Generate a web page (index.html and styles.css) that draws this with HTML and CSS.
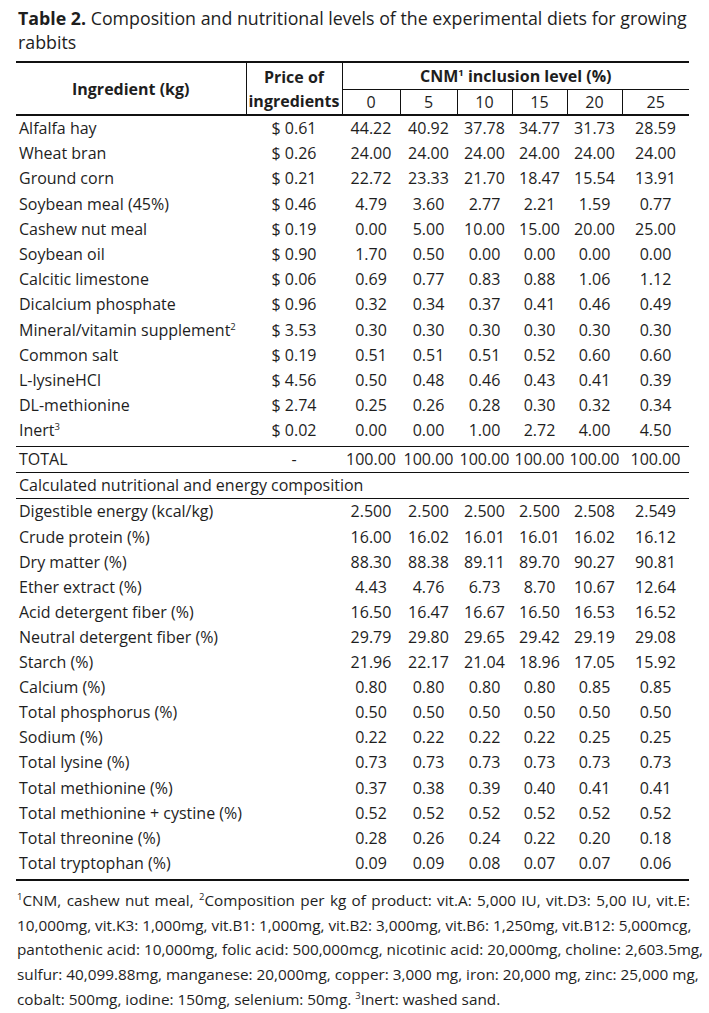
FILE: index.html
```html
<!DOCTYPE html>
<html lang="en">
<head>
<meta charset="utf-8">
<title>Table 2</title>
<link rel="stylesheet" href="styles.css">
</head>
<body>
<div class="page">
  <p class="caption"><span class="cap-line"><b>Table 2.</b> Composition and nutritional levels of the experimental diets for growing</span><span class="cap-line">rabbits</span></p>
  <table class="diet">
    <colgroup>
      <col class="c-ing"><col class="c-price"><col class="c-0"><col class="c-5"><col class="c-10"><col class="c-15"><col class="c-20"><col class="c-25">
    </colgroup>
    <thead>
      <tr class="h1">
        <th rowspan="2" class="vr">Ingredient (kg)</th>
        <th rowspan="2" class="vr price-h">Price of<br>ingredients</th>
        <th colspan="6" class="cnm">CNM<sup>1</sup> inclusion level (%)</th>
      </tr>
      <tr class="h2">
        <th class="lvl vr">0</th><th class="lvl vr">5</th><th class="lvl vr">10</th><th class="lvl vr">15</th><th class="lvl vr">20</th><th class="lvl">25</th>
      </tr>
    </thead>
    <tbody class="ingredients">
      <tr><td>Alfalfa hay</td><td>$ 0.61</td><td>44.22</td><td>40.92</td><td>37.78</td><td>34.77</td><td>31.73</td><td>28.59</td></tr>
      <tr><td>Wheat bran</td><td>$ 0.26</td><td>24.00</td><td>24.00</td><td>24.00</td><td>24.00</td><td>24.00</td><td>24.00</td></tr>
      <tr><td>Ground corn</td><td>$ 0.21</td><td>22.72</td><td>23.33</td><td>21.70</td><td>18.47</td><td>15.54</td><td>13.91</td></tr>
      <tr><td>Soybean meal (45%)</td><td>$ 0.46</td><td>4.79</td><td>3.60</td><td>2.77</td><td>2.21</td><td>1.59</td><td>0.77</td></tr>
      <tr><td>Cashew nut meal</td><td>$ 0.19</td><td>0.00</td><td>5.00</td><td>10.00</td><td>15.00</td><td>20.00</td><td>25.00</td></tr>
      <tr><td>Soybean oil</td><td>$ 0.90</td><td>1.70</td><td>0.50</td><td>0.00</td><td>0.00</td><td>0.00</td><td>0.00</td></tr>
      <tr><td>Calcitic limestone</td><td>$ 0.06</td><td>0.69</td><td>0.77</td><td>0.83</td><td>0.88</td><td>1.06</td><td>1.12</td></tr>
      <tr><td>Dicalcium phosphate</td><td>$ 0.96</td><td>0.32</td><td>0.34</td><td>0.37</td><td>0.41</td><td>0.46</td><td>0.49</td></tr>
      <tr><td>Mineral/vitamin supplement<sup>2</sup></td><td>$ 3.53</td><td>0.30</td><td>0.30</td><td>0.30</td><td>0.30</td><td>0.30</td><td>0.30</td></tr>
      <tr><td>Common salt</td><td>$ 0.19</td><td>0.51</td><td>0.51</td><td>0.51</td><td>0.52</td><td>0.60</td><td>0.60</td></tr>
      <tr><td>L-lysineHCl</td><td>$ 4.56</td><td>0.50</td><td>0.48</td><td>0.46</td><td>0.43</td><td>0.41</td><td>0.39</td></tr>
      <tr><td>DL-methionine</td><td>$ 2.74</td><td>0.25</td><td>0.26</td><td>0.28</td><td>0.30</td><td>0.32</td><td>0.34</td></tr>
      <tr><td>Inert<sup>3</sup></td><td>$ 0.02</td><td>0.00</td><td>0.00</td><td>1.00</td><td>2.72</td><td>4.00</td><td>4.50</td></tr>
    </tbody>
    <tbody class="total">
      <tr><td>TOTAL</td><td>-</td><td>100.00</td><td>100.00</td><td>100.00</td><td>100.00</td><td>100.00</td><td>100.00</td></tr>
    </tbody>
    <tbody class="section">
      <tr><td colspan="8">Calculated nutritional and energy composition</td></tr>
    </tbody>
    <tbody class="nutrients">
      <tr><td>Digestible energy (kcal/kg)</td><td></td><td>2.500</td><td>2.500</td><td>2.500</td><td>2.500</td><td>2.508</td><td>2.549</td></tr>
      <tr><td>Crude protein (%)</td><td></td><td>16.00</td><td>16.02</td><td>16.01</td><td>16.01</td><td>16.02</td><td>16.12</td></tr>
      <tr><td>Dry matter (%)</td><td></td><td>88.30</td><td>88.38</td><td>89.11</td><td>89.70</td><td>90.27</td><td>90.81</td></tr>
      <tr><td>Ether extract (%)</td><td></td><td>4.43</td><td>4.76</td><td>6.73</td><td>8.70</td><td>10.67</td><td>12.64</td></tr>
      <tr><td>Acid detergent fiber (%)</td><td></td><td>16.50</td><td>16.47</td><td>16.67</td><td>16.50</td><td>16.53</td><td>16.52</td></tr>
      <tr><td>Neutral detergent fiber (%)</td><td></td><td>29.79</td><td>29.80</td><td>29.65</td><td>29.42</td><td>29.19</td><td>29.08</td></tr>
      <tr><td>Starch (%)</td><td></td><td>21.96</td><td>22.17</td><td>21.04</td><td>18.96</td><td>17.05</td><td>15.92</td></tr>
      <tr><td>Calcium (%)</td><td></td><td>0.80</td><td>0.80</td><td>0.80</td><td>0.80</td><td>0.85</td><td>0.85</td></tr>
      <tr><td>Total phosphorus (%)</td><td></td><td>0.50</td><td>0.50</td><td>0.50</td><td>0.50</td><td>0.50</td><td>0.50</td></tr>
      <tr><td>Sodium (%)</td><td></td><td>0.22</td><td>0.22</td><td>0.22</td><td>0.22</td><td>0.25</td><td>0.25</td></tr>
      <tr><td>Total lysine (%)</td><td></td><td>0.73</td><td>0.73</td><td>0.73</td><td>0.73</td><td>0.73</td><td>0.73</td></tr>
      <tr><td>Total methionine (%)</td><td></td><td>0.37</td><td>0.38</td><td>0.39</td><td>0.40</td><td>0.41</td><td>0.41</td></tr>
      <tr><td>Total methionine + cystine (%)</td><td></td><td>0.52</td><td>0.52</td><td>0.52</td><td>0.52</td><td>0.52</td><td>0.52</td></tr>
      <tr><td>Total threonine (%)</td><td></td><td>0.28</td><td>0.26</td><td>0.24</td><td>0.22</td><td>0.20</td><td>0.18</td></tr>
      <tr><td>Total tryptophan (%)</td><td></td><td>0.09</td><td>0.09</td><td>0.08</td><td>0.07</td><td>0.07</td><td>0.06</td></tr>
    </tbody>
  </table>
  <div class="notes">
    <span class="ln"><sup>1</sup>CNM, cashew nut meal, <sup>2</sup>Composition per kg of product: vit.A: 5,000 IU, vit.D3: 5,00 IU, vit.E:</span>
    <span class="ln">10,000mg, vit.K3: 1,000mg, vit.B1: 1,000mg, vit.B2: 3,000mg, vit.B6: 1,250mg, vit.B12: 5,000mcg,</span>
    <span class="ln">pantothenic acid: 10,000mg, folic acid: 500,000mcg, nicotinic acid: 20,000mg, choline: 2,603.5mg,</span>
    <span class="ln">sulfur: 40,099.88mg, manganese: 20,000mg, copper: 3,000 mg, iron: 20,000 mg, zinc: 25,000 mg,</span>
    <span class="ln last">cobalt: 500mg, iodine: 150mg, selenium: 50mg. <sup>3</sup>Inert: washed sand.</span>
  </div>
</div>
</body>
</html>
```
FILE: styles.css
```css
html, body {
  margin: 0;
  padding: 0;
  background: #ffffff;
}

.page {
  padding: 6px 20px 0 16px;
  font-family: "Open Sans", "DejaVu Sans", sans-serif;
  color: #1e1e1e;
}

.caption {
  width: 673px;
  margin: 0 0 7px 2px;
  font-size: 17.8px;
  line-height: 24px;
}

.cap-line {
  display: block;
  white-space: nowrap;
}

.caption b {
  font-weight: 700;
}

sup {
  font-size: 9.5px;
  line-height: 0;
  vertical-align: 6px;
}

.diet {
  width: 673px;
  border-collapse: collapse;
  table-layout: fixed;
  font-size: 16px;
  border-top: 2px solid #111;
  border-bottom: 2px solid #111;
}

.c-ing { width: 230px; }
.c-price { width: 96px; }
.c-0 { width: 58px; }
.c-5 { width: 57px; }
.c-10 { width: 55px; }
.c-15 { width: 55px; }
.c-20 { width: 55px; }
.c-25 { width: 67px; }

.diet th {
  font-weight: 700;
  text-align: center;
  padding: 0;
  line-height: 24px;
  white-space: nowrap;
}

.diet thead {
  border-bottom: 2px solid #111;
}

.h1 th { height: 26px; }
.h2 th { height: 23px; }

.diet th.vr {
  border-right: 1px solid #111;
}

.diet th.cnm {
  border-bottom: 1px solid #111;
}

.price-h {
  line-height: 25px;
}

.diet th.lvl {
  font-weight: 400;
}

.diet td {
  padding: 0;
  height: 25.2px;
  line-height: 25px;
  text-align: center;
  white-space: nowrap;
}

.nutrients td {
  height: 25.1px;
}

.ingredients tr:last-child td,
.nutrients tr:last-child td {
  padding-bottom: 3px;
}

.diet td:first-child {
  text-align: left;
  padding-left: 3px;
}

.total {
  border-top: 1px solid #111;
  border-bottom: 1px solid #111;
}

.total td,
.section td {
  height: 25px;
}

.section {
  border-bottom: 1px solid #111;
}

.notes {
  width: 673px;
  margin-top: 7px;
  font-size: 15.3px;
  line-height: 24.8px;
  padding-left: 1px;
}

.ln {
  display: block;
  text-align: justify;
  text-align-last: justify;
  white-space: nowrap;
}

.ln.last {
  text-align-last: left;
}
```
